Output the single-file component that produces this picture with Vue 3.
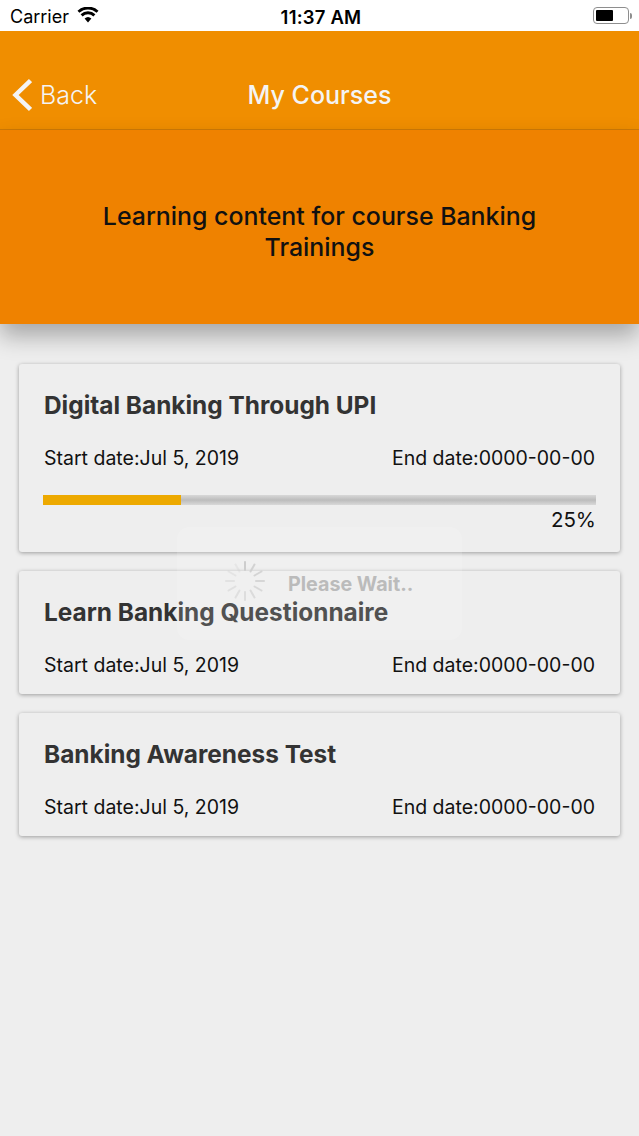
<script setup>
const courses = [
  { title: 'Digital Banking Through UPI', progress: 25 },
  { title: 'Learn Banking Questionnaire' },
  { title: 'Banking Awareness Test' }
]
const spokes = Array.from({ length: 12 }, (_, i) => ({ angle: i * 30, opacity: i === 0 ? 1 : 0.22 + 0.7 * ((12 - i) % 12) / 12 }))
</script>

<template>
  <div class="screen">
    <div class="status">
      <div class="status-left">
        <span>Carrier</span>
        <svg class="wifi" width="22" height="16" viewBox="0 0 22 16">
          <path d="M11 15.5 L7.6 11.6 A5 5 0 0 1 14.4 11.6 Z" fill="#000" />
          <path d="M5.6 9.4 L3.6 7.2 A11 11 0 0 1 18.4 7.2 L16.4 9.4 A8 8 0 0 0 5.6 9.4 Z" fill="#000" />
          <path d="M2.4 5.8 L0.5 3.7 A15.5 15.5 0 0 1 21.5 3.7 L19.6 5.8 A12.6 12.6 0 0 0 2.4 5.8 Z" fill="#000" />
        </svg>
      </div>
      <div class="status-time">11:37 AM</div>
      <div class="battery">
        <div class="battery-body"><div class="battery-fill"></div></div>
        <div class="battery-cap"></div>
      </div>
    </div>

    <div class="navbar">
      <div class="back">
        <svg width="22" height="34" viewBox="0 0 22 34">
          <path d="M20.5 2.5 L5.5 17 L20.5 31.5" fill="none" stroke="#f4f4f4" stroke-width="4.5" />
        </svg>
        <span>Back</span>
      </div>
      <div class="nav-title">My Courses</div>
    </div>

    <div class="hero">
      <div class="hero-text">Learning content for course Banking Trainings</div>
    </div>

    <div class="list">
      <div v-for="c in courses" :key="c.title" class="card" :class="{ 'with-progress': c.progress }">
        <div class="card-title">{{ c.title }}</div>
        <div class="dates">
          <span>Start date:Jul 5, 2019</span>
          <span>End date:0000-00-00</span>
        </div>
        <template v-if="c.progress">
          <div class="track"><div class="bar" :style="{ width: c.progress + '%' }"></div></div>
          <div class="percent">{{ c.progress }}%</div>
        </template>
      </div>
    </div>

    <div class="loader">
      <svg class="spinner" width="42" height="42" viewBox="0 0 42 42">
        <rect v-for="s in spokes" :key="s.angle" x="20" y="1" width="2" height="10" rx="1" fill="#cdcdcd"
          :opacity="s.opacity" :transform="`rotate(${s.angle} 21 21)`" />
      </svg>
      <span class="wait">Please Wait..</span>
    </div>
  </div>
</template>

<style scoped>
.screen {
  position: relative;
  width: 639px;
  height: 1136px;
  overflow: hidden;
  background: #eeeeee;
  font-family: Inter, "Liberation Sans", sans-serif;
}
.status {
  height: 31px;
  background: #fff;
  display: grid;
  grid-template-columns: 1fr auto 1fr;
  align-items: center;
  padding: 2px 7px 0 10px;
  box-sizing: border-box;
  color: #000;
}
.status-left {
  display: flex;
  align-items: center;
  gap: 8px;
  font-size: 18px;
}
.wifi { margin-top: -4px; }
.status-time {
  font-size: 18.5px;
  font-weight: 600;
  letter-spacing: 0.2px;
}
.battery {
  justify-self: end;
  display: flex;
  align-items: center;
  gap: 1px;
  margin-top: -2px;
}
.battery-body {
  width: 36px;
  height: 17px;
  box-sizing: border-box;
  border: 1.5px solid #8e8e8e;
  border-radius: 4px;
  padding: 2px;
}
.battery-fill {
  width: 17px;
  height: 100%;
  background: #000;
  border-radius: 1px;
}
.battery-cap {
  width: 2px;
  height: 6px;
  background: #8e8e8e;
  border-radius: 0 2px 2px 0;
}
.navbar {
  position: relative;
  height: 99px;
  box-sizing: border-box;
  background: #f08e00;
  border-bottom: 1px solid #cf7a06;
  display: flex;
  align-items: flex-end;
  justify-content: center;
  padding-bottom: 17px;
}
.back {
  position: absolute;
  left: 10px;
  bottom: 17px;
  display: flex;
  align-items: center;
  gap: 8px;
  color: #f4f4f4;
  font-size: 25px;
  font-weight: 300;
  line-height: 34px;
}
.nav-title {
  color: #f4f4f4;
  font-size: 25px;
  font-weight: 500;
  line-height: 34px;
}
.hero {
  position: relative;
  height: 194px;
  background: #ef8200;
  box-shadow: 0 12px 22px rgba(0, 0, 0, 0.3);
  display: flex;
  align-items: center;
  justify-content: center;
  text-align: center;
  padding-top: 10px;
  box-sizing: border-box;
}
.hero-text {
  width: 480px;
  color: #111;
  font-size: 24.9px;
  font-weight: 500;
  line-height: 31px;
}
.list {
  padding: 40px 19px 0 19px;
  display: flex;
  flex-direction: column;
  gap: 19px;
}
.card {
  background: #eeeeee;
  border-radius: 3px;
  box-shadow: 0 1px 4px rgba(0, 0, 0, 0.35);
  padding: 24px 25px 0;
  height: 123px;
  box-sizing: border-box;
}
.card.with-progress { height: 188px; }
.card-title {
  font-size: 24.4px;
  font-weight: 700;
  line-height: 34px;
  color: #333;
}
.dates {
  margin-top: 23px;
  display: flex;
  justify-content: space-between;
  font-size: 19.5px;
  line-height: 26px;
  color: #111;
}
.track {
  margin: 24px -1px 0;
  height: 10px;
  background: linear-gradient(#d8d8d8, #bcbcbc 50%, #d8d8d8);
}
.bar {
  height: 100%;
  background: #eda900;
}
.percent {
  text-align: right;
  font-size: 20.5px;
  line-height: 28px;
  margin: 1px -1px 0 0;
  color: #111;
}
.loader {
  position: absolute;
  left: 177px;
  top: 527px;
  width: 285px;
  height: 113px;
  border-radius: 12px;
  background: rgba(255, 255, 255, 0.15);
  box-sizing: border-box;
  padding-left: 47px;
  display: flex;
  align-items: center;
  gap: 22px;
}
.spinner { margin-top: -6px; }
.wait {
  color: #bbb;
  font-size: 19.7px;
  font-weight: 700;
  margin-top: 1px;
}
</style>
